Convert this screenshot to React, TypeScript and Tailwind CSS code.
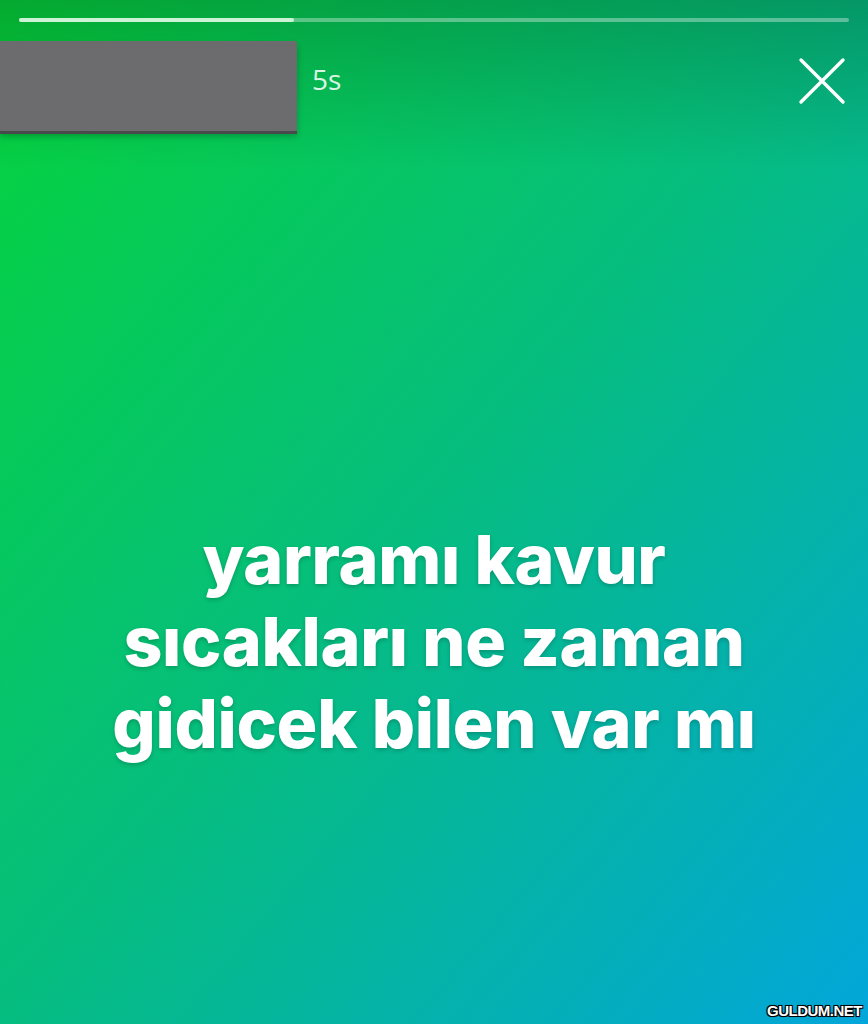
import React from "react";

export default function App() {
  return (
    <div className="relative w-[868px] h-[1024px] overflow-hidden bg-[linear-gradient(to_bottom_right,#05d43a,#06bd80_50%,#03a6da)] font-['Inter',sans-serif]">
      <div className="pointer-events-none absolute inset-x-0 top-0 h-[170px] bg-[linear-gradient(to_bottom,rgba(0,0,0,0.2),rgba(0,0,0,0))]" />
      <div className="relative flex flex-col">
        <div className="mx-[19px] mt-[18px] h-[4px] rounded-full bg-white/35 flex">
          <div className="w-[275px] h-full rounded-full bg-[#cdf3d6]" />
        </div>
        <div className="flex items-start mt-[19px]">
          <div className="w-[297px] h-[90px] bg-[#6c6c6e] rounded-tr-[2px] shadow-[0_3px_0_#4a4a4c,0_5px_6px_rgba(0,0,0,0.25)]" />
          <div className="ml-[15px] mt-[24px] text-[28px] leading-none text-white/85 font-['Open_Sans',sans-serif]">5s</div>
          <div className="ml-auto mr-[22px] mt-[16px]">
            <svg width="48" height="48" viewBox="0 0 48 48" fill="none" stroke="white" strokeWidth="3.4" strokeLinecap="round">
              <path d="M3 3 L45 45 M45 3 L3 45" />
            </svg>
          </div>
        </div>
        <div className="mt-[387px] flex flex-col items-center text-white font-extrabold text-[68px] leading-[82px] tracking-[-0.3px] [text-shadow:0_2px_4px_rgba(0,0,0,0.2)]">
          <div>yarramı kavur</div>
          <div>sıcakları ne zaman</div>
          <div>gidicek bilen var mı</div>
        </div>
      </div>
      <div className="absolute right-[6px] bottom-[2px] text-[15px] font-extrabold text-white font-['Liberation_Sans',sans-serif] tracking-[-0.5px] [text-shadow:-1px_-1px_0_#000,1px_-1px_0_#000,-1px_1px_0_#000,1px_1px_0_#000,0_0_2px_#000]">
        GULDUM.NET
      </div>
    </div>
  );
}
